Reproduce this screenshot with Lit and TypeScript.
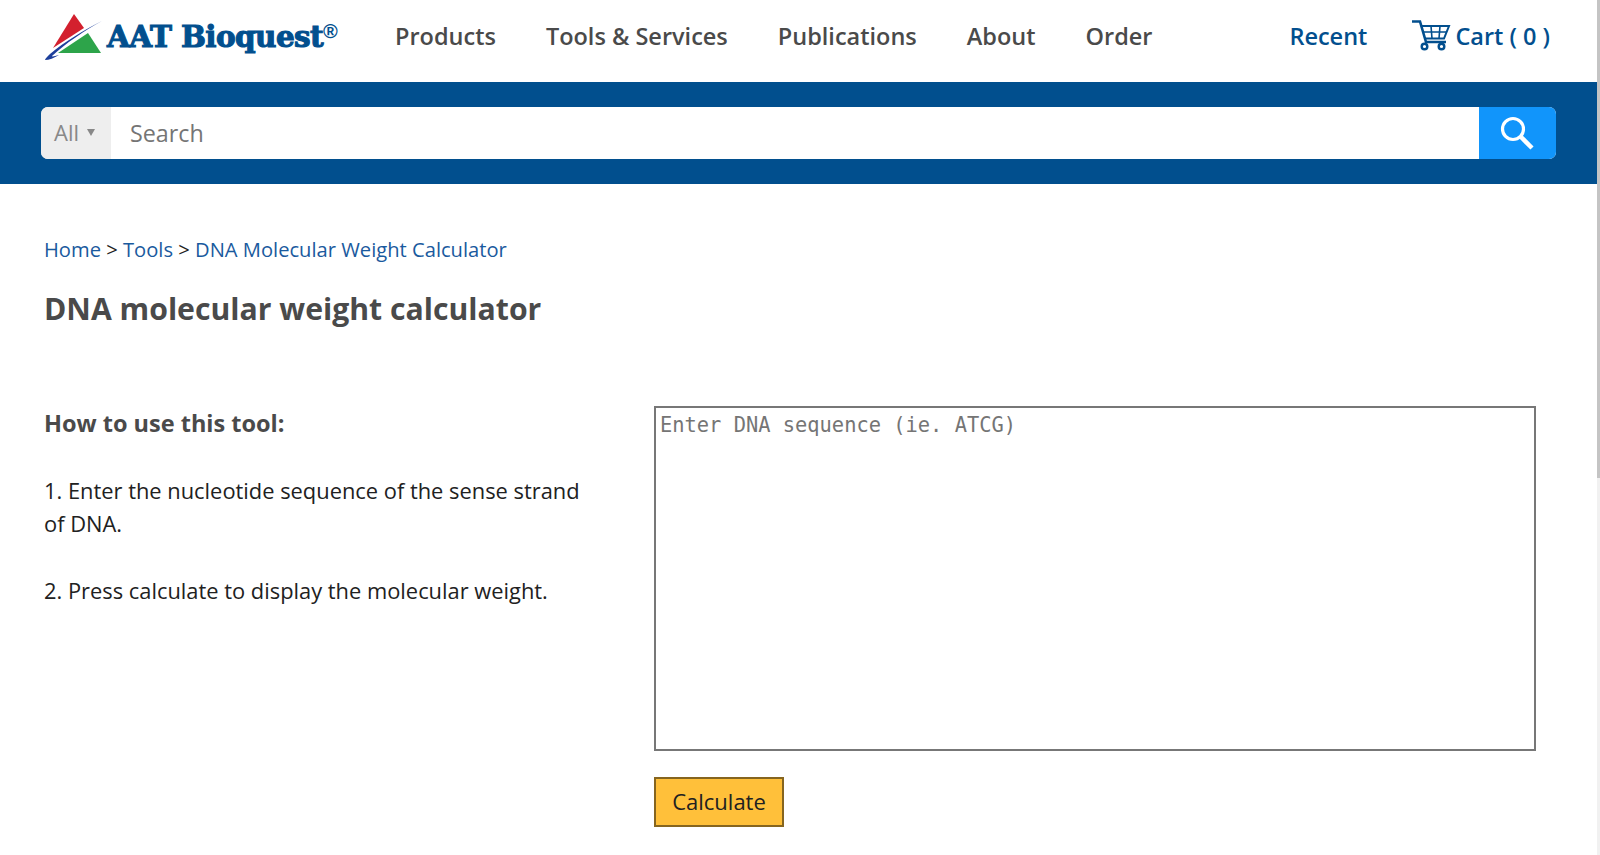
import { LitElement, html, css } from "lit";
import { customElement } from "lit/decorators.js";

@customElement("app-root")
export class AppRoot extends LitElement {
  static styles = css`
    :host { display: block; height: 855px; overflow: hidden; background: #fff; font-family: "Open Sans", sans-serif; color: #212121; position: relative; }
    .page { width: 1597px; height: 855px; box-sizing: border-box; }
    .scroll { position: absolute; right: 0; top: 0; bottom: 0; width: 3px; background: #f1f1f1; }
    .thumb { height: 478px; background: #c4c4c4; }
    header { height: 82px; display: flex; align-items: center; padding: 0 46px 10px 44px; box-sizing: border-box; }
    .logo { width: 291px; height: 52px; display: flex; align-items: center; flex: none; }
    .logo svg { width: 60px; height: 52px; flex: none; }
    .brand { font-family: "DejaVu Serif", serif; font-weight: 700; font-size: 29.5px; color: #024f8e; white-space: nowrap; letter-spacing: -0.6px; -webkit-text-stroke: 1.1px #024f8e; margin-left: 3px; }
    .brand sup { font-family: "Liberation Sans", sans-serif; font-size: 20px; vertical-align: 9px; line-height: 0; letter-spacing: 0; font-weight: 700; -webkit-text-stroke: 0; }
    nav { display: flex; gap: 50px; margin-left: 60px; }
    nav a { font-size: 23.5px; font-weight: 600; color: #4a4a4a; }
    .right { margin-left: auto; display: flex; align-items: center; color: #024f8e; font-size: 23.5px; font-weight: 600; }
    .cart { display: flex; align-items: center; margin-left: 44px; gap: 4px; margin-right: 1px; }
    .cart svg { width: 40px; height: 32px; }
    .bar { height: 102px; background: #014f8e; padding: 25px 41px; box-sizing: border-box; }
    .search { height: 52px; display: flex; border-radius: 7px; overflow: hidden; background: #fff; }
    .all { width: 70px; background: #eee; color: #888; font-size: 22px; display: flex; align-items: center; padding: 0 0 2px 13px; gap: 8px; box-sizing: border-box; }
    .all i { width: 0; height: 0; border-left: 4px solid transparent; border-right: 4px solid transparent; border-top: 7px solid #888; }
    .input { flex: 1; font-size: 23.3px; color: #757575; padding-left: 19px; display: flex; align-items: center; }
    .go { width: 77px; background: #1195fb; display: flex; align-items: center; justify-content: center; }
    .go svg { width: 38px; height: 36px; }
    main { padding: 51px 61px 0 44px; }
    .crumbs { font-size: 20.17px; line-height: 28px; color: #212121; }
    .crumbs a { color: #1a5a9e; }
    h1 { font-size: 30.2px; font-weight: 700; color: #4a4a4a; margin: 25px 0 0; line-height: 41px; }
    .cols { display: flex; margin-top: 77px; }
    .help { width: 610px; flex: none; font-size: 21.87px; line-height: 33.4px; padding-top: 1px; }
    .help p { margin: 0 0 33.4px; width: 560px; }
    .help b { color: #4a4a4a; font-weight: 700; font-size: 23.5px; }
    .tool { flex: 1; }
    .area { height: 345px; border: 2px solid #777; box-sizing: border-box; font-family: "DejaVu Sans Mono", monospace; font-size: 20.4px; color: #757575; padding: 4px 4px; line-height: 26px; }
    button { margin-top: 26px; display: block; width: 130px; height: 50px; background: #ffc03a; border: 2px solid #86651f; font-family: "Open Sans", sans-serif; font-size: 22px; color: #212121; padding: 0 0 2px; }
  `;
  render() {
    return html`<div class="page">
      <header>
        <div class="logo">
          <svg viewBox="0 0 60 52">
            <polygon points="30,4 9,38 40,18" fill="#d3202e"/>
            <polygon points="44,23 57,43 14,43" fill="#2da44a"/>
            <path d="M58 11 C40 20 20 32 6 44 C3 47 1 49 1 50 C5 50 10 48 15 45 C11 46 8 47 8 46 C22 33 40 21 58 11Z" fill="#1d3f9b"/>
          </svg>
          <span class="brand">AAT Bioquest<sup>®</sup></span>
        </div>
        <nav><a>Products</a><a>Tools &amp; Services</a><a>Publications</a><a>About</a><a>Order</a></nav>
        <div class="right">
          <span>Recent</span>
          <span class="cart">
            <svg viewBox="0 0 40 32" fill="none" stroke="#024f8e" stroke-width="2">
              <path d="M1 1.5h8l6 20.5h20" stroke-width="2.6"/>
              <path d="M10.5 6h27.5l-5 12.5H14"/>
              <path d="M12.5 12h23M20 6l1 12.5M29 6l-1 12.5" stroke-width="1.6"/>
              <circle cx="13.5" cy="26.5" r="2.8" stroke-width="2.4"/><circle cx="30.5" cy="26.5" r="2.8" stroke-width="2.4"/>
            </svg>
            <span>Cart ( 0 )</span>
          </span>
        </div>
      </header>
      <div class="bar">
        <div class="search">
          <div class="all">All <i></i></div>
          <div class="input">Search</div>
          <div class="go"><svg viewBox="0 0 38 36" fill="none" stroke="#fff"><circle cx="14" cy="14" r="10.5" stroke-width="3.2"/><path d="M22 22l11 11" stroke-width="4.5"/></svg></div>
        </div>
      </div>
      <main>
        <div class="crumbs"><a>Home</a> &gt; <a>Tools</a> &gt; <a>DNA Molecular Weight Calculator</a></div>
        <h1>DNA molecular weight calculator</h1>
        <div class="cols">
          <div class="help">
            <p><b>How to use this tool:</b></p>
            <p>1. Enter the nucleotide sequence of the sense strand of DNA.</p>
            <p>2. Press calculate to display the molecular weight.</p>
          </div>
          <div class="tool">
            <div class="area">Enter DNA sequence (ie. ATCG)</div>
            <button>Calculate</button>
          </div>
        </div>
      </main>
    </div>
    <div class="scroll"><div class="thumb"></div></div>`;
  }
}
